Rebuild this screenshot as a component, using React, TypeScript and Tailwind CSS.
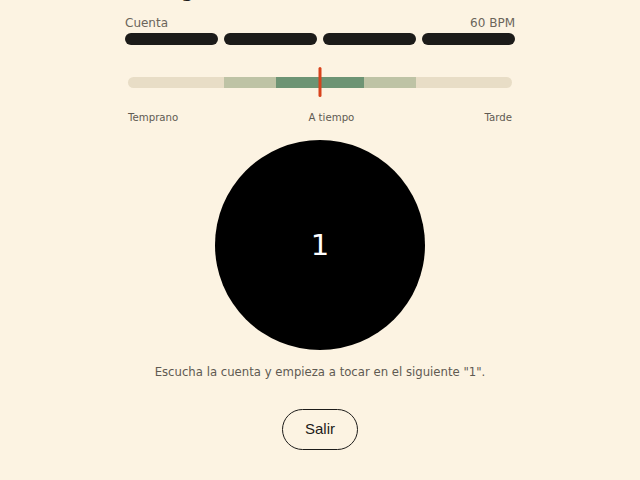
export default function App() {
  const beats = [0, 1, 2, 3];

  return (
    <div className="min-h-screen overflow-hidden bg-[#fcf3e2] font-['DejaVu_Sans',sans-serif] text-[#1c1b19]">
      <div className="mx-auto flex w-[390px] flex-col">
        {/* header, scrolled mostly out of view */}
        <div className="-mt-[21px] flex h-[24px] items-baseline justify-between leading-[24px]">
          <span className="text-[18px] font-bold">Timing · 1</span>
          <span className="text-[11px] text-[#6b655b]">Esperando entrada</span>
        </div>

        <div className="mt-[12px] flex justify-between text-[12px] leading-[16px] text-[#6b655b]">
          <span>Cuenta</span>
          <span>60 BPM</span>
        </div>

        <div className="mt-[2px] flex gap-[6px]">
          {beats.map((b) => (
            <div key={b} className="h-[12px] flex-1 rounded-full bg-[#1c1b19]" />
          ))}
        </div>

        {/* timing meter */}
        <div className="relative mx-[3px] mt-[22px] flex h-[30px] items-center">
          <div className="relative h-[11px] w-full overflow-hidden rounded-full bg-[#e8ddc6]">
            <div className="absolute inset-y-0 left-[25%] right-[25%] bg-[#bec3a5]" />
            <div className="absolute inset-y-0 left-[38.5%] right-[38.5%] bg-[#6d9474]" />
          </div>
          <div className="absolute left-1/2 top-0 h-[30px] w-[3px] -translate-x-1/2 rounded-full bg-[#d8431c]" />
        </div>

        <div className="mx-[3px] mt-[14px] flex justify-between text-[10.2px] leading-[14px] text-[#5f5a52]">
          <span>Temprano</span>
          <span>A tiempo</span>
          <span>Tarde</span>
        </div>

        <div className="mx-auto mt-[15px] flex h-[210px] w-[210px] items-center justify-center rounded-full bg-black">
          <span className="text-[29px] leading-none text-white">1</span>
        </div>

        <p className="mt-[13px] text-center text-[11.7px] leading-[18px] text-[#5f5a52]">
          Escucha la cuenta y empieza a tocar en el siguiente "1".
        </p>

        <button className="mx-auto mt-[28px] h-[41px] w-[76px] rounded-full border border-[#1c1b19] bg-transparent font-['Liberation_Sans',sans-serif] text-[15px] text-[#1c1b19]">
          Salir
        </button>
      </div>
    </div>
  );
}
